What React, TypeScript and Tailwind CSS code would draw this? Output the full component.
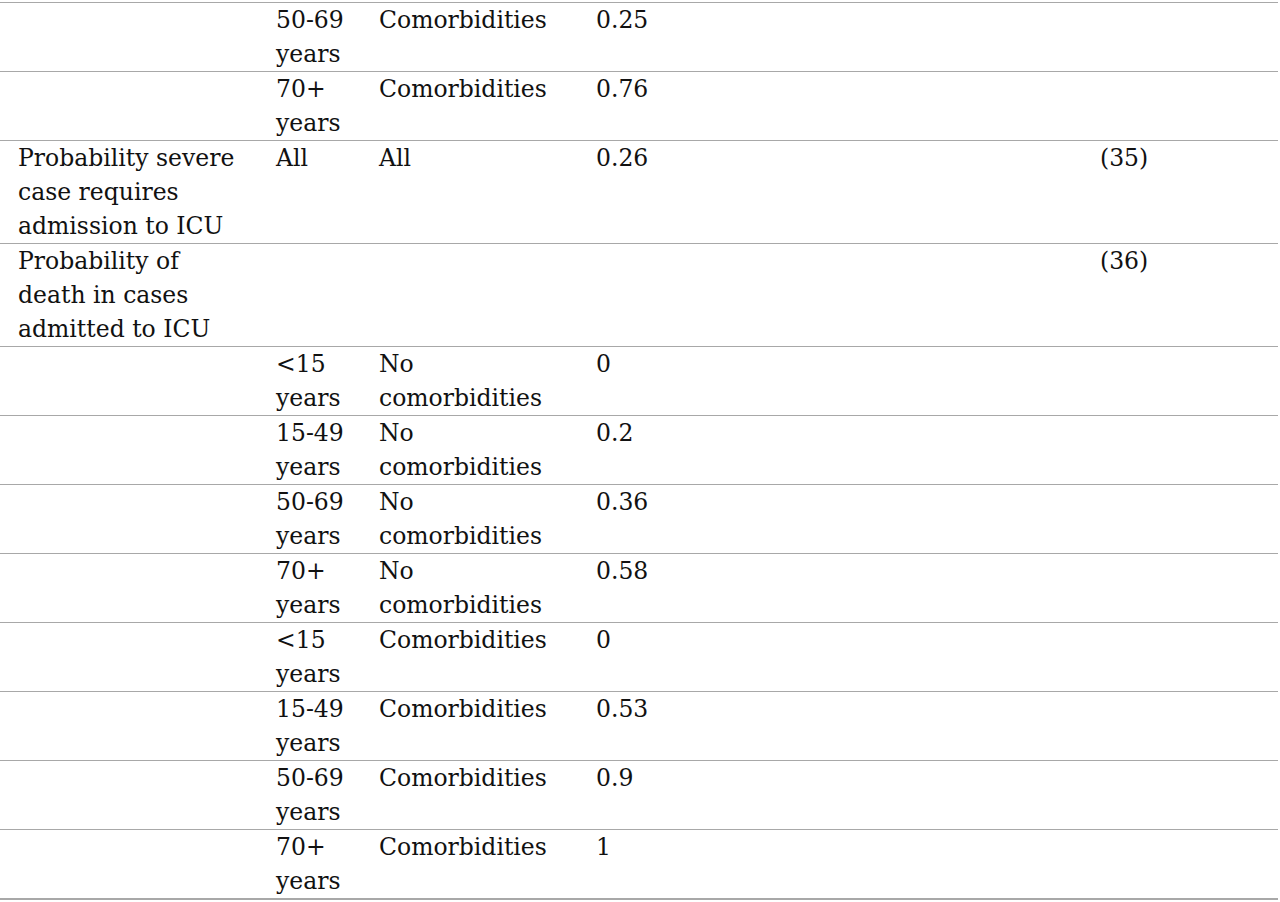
import React from "react";

type Row = { c1: string[]; c2: string[]; c3: string[]; c4: string; c6: string };

const rows: Row[] = [
  { c1: [], c2: ["50-69", "years"], c3: ["Comorbidities"], c4: "0.25", c6: "" },
  { c1: [], c2: ["70+", "years"], c3: ["Comorbidities"], c4: "0.76", c6: "" },
  {
    c1: ["Probability severe", "case requires", "admission to ICU"],
    c2: ["All"],
    c3: ["All"],
    c4: "0.26",
    c6: "(35)",
  },
  {
    c1: ["Probability of", "death in cases", "admitted to ICU"],
    c2: [],
    c3: [],
    c4: "",
    c6: "(36)",
  },
  { c1: [], c2: ["<15", "years"], c3: ["No", "comorbidities"], c4: "0", c6: "" },
  { c1: [], c2: ["15-49", "years"], c3: ["No", "comorbidities"], c4: "0.2", c6: "" },
  { c1: [], c2: ["50-69", "years"], c3: ["No", "comorbidities"], c4: "0.36", c6: "" },
  { c1: [], c2: ["70+", "years"], c3: ["No", "comorbidities"], c4: "0.58", c6: "" },
  { c1: [], c2: ["<15", "years"], c3: ["Comorbidities"], c4: "0", c6: "" },
  { c1: [], c2: ["15-49", "years"], c3: ["Comorbidities"], c4: "0.53", c6: "" },
  { c1: [], c2: ["50-69", "years"], c3: ["Comorbidities"], c4: "0.9", c6: "" },
  { c1: [], c2: ["70+", "years"], c3: ["Comorbidities"], c4: "1", c6: "" },
];

function Lines({ lines }: { lines: string[] }) {
  return (
    <>
      {lines.map((l, i) => (
        <div key={i} className="whitespace-nowrap">
          {l}
        </div>
      ))}
    </>
  );
}

export default function App() {
  return (
    <div
      className="w-[1280px] h-[902px] overflow-hidden bg-white pt-[2px] text-[#111111] text-[23.5px] leading-[34px]"
      style={{ fontFamily: '"DejaVu Serif", serif' }}
    >
      <div className="w-[1278px] border-b-2 border-[#a8a8a8]">
        {rows.map((r, i) => (
          <div key={i} className="flex border-t border-[#a8a8a8] min-h-[69px]">
            <div className="w-[276px] pl-[18px]">
              <Lines lines={r.c1} />
            </div>
            <div className="w-[103px]">
              <Lines lines={r.c2} />
            </div>
            <div className="w-[217px]">
              <Lines lines={r.c3} />
            </div>
            <div className="w-[504px]">{r.c4}</div>
            <div className="flex-1">{r.c6}</div>
          </div>
        ))}
      </div>
    </div>
  );
}
